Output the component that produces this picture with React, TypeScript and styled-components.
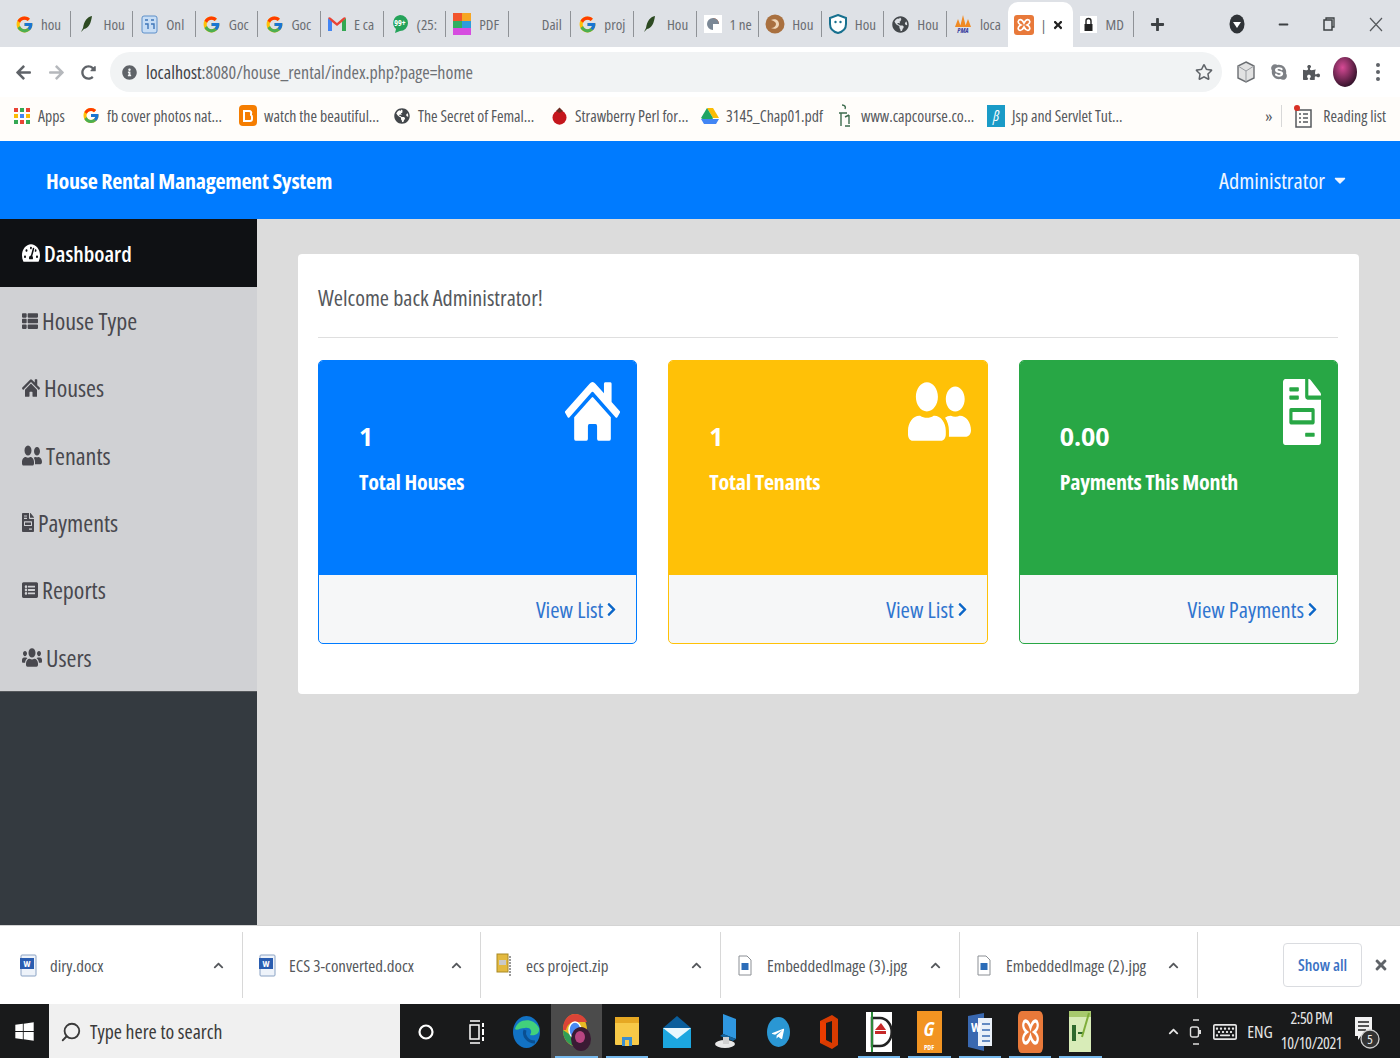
import React from "react";
import styled, { createGlobalStyle } from "styled-components";
import {
  FaTachometerAlt, FaThList, FaHome, FaUserFriends, FaFileInvoice, FaListAlt, FaUsers, FaChevronRight,
  FaArrowLeft, FaArrowRight, FaRedoAlt, FaInfoCircle, FaRegStar, FaSkype, FaPuzzlePiece, FaGlobeAmericas,
  FaWindows, FaTelegramPlane, FaRegKeyboard, FaCaretDown, FaPlus, FaTimes, FaMinus, FaChevronUp,
} from "react-icons/fa";
import { FcGoogle } from "react-icons/fc";
import { FiSearch } from "react-icons/fi";

const GlobalStyle = createGlobalStyle`
  html, body { margin: 0; padding: 0; background: #fff; }
  * { box-sizing: border-box; }
  body { font-family: "Open Sans", "Liberation Sans", sans-serif; font-stretch: 75%; }
`;

const Page = styled.div`
  width: 1400px; height: 1058px; overflow: hidden;
  display: flex; flex-direction: column;
`;

/* ---- browser chrome ---- */
const TabStrip = styled.div`
  height: 47px; flex: none; background: #dee1e6;
  display: flex; align-items: center; padding-left: 8px; padding-top: 1px;
`;
const Tab = styled.div<{ $active?: boolean; $w?: number; $sep?: boolean }>`
  width: ${(p) => p.$w ?? 62.6}px; height: ${(p) => (p.$active ? 46 : 26)}px; flex: none;
  display: flex; align-items: center; gap: 7px; padding-left: 6px; overflow: hidden;
  margin-top: ${(p) => (p.$active ? 1 : 0)}px;
  margin-left: ${(p) => (p.$active ? -2 : 0)}px;
  background: ${(p) => (p.$active ? "#fff" : "transparent")};
  border-radius: ${(p) => (p.$active ? "10px 10px 0 0" : "0")};
  border-right: ${(p) => (p.$sep === false ? "none" : "1px solid #8f9297")};
  font-size: 15px; color: #6a6d72; white-space: nowrap;
`;
const TabIcon = styled.span`
  width: 20px; height: 20px; flex: none; display: flex; align-items: center; justify-content: center;
`;
const TabClose = styled(FaTimes)`
  color: #222; font-size: 12px; margin-left: -2px;
`;
const NewTab = styled(FaPlus)`
  color: #3c4043; font-size: 15px; margin-left: 16px;
`;
const WindowControls = styled.div`
  margin-left: auto; display: flex; align-items: center; color: #3c4043;
`;
const WinBtn = styled.span<{ $w: number }>`
  width: ${(p) => p.$w}px; display: flex; justify-content: center; align-items: center;
`;
const Toolbar = styled.div`
  height: 50px; flex: none; background: #fff; display: flex; align-items: center; padding-left: 13px;
`;
const NavIcon = styled.span<{ $c?: string }>`
  width: 33px; flex: none; display: flex; justify-content: flex-start; padding-left: 2px;
  color: ${(p) => p.$c ?? "#5f6368"}; font-size: 17px;
`;
const Omnibox = styled.div`
  width: 1112px; height: 40px; margin-left: -2px; border-radius: 20px; background: #f1f3f4;
  display: flex; align-items: center; padding-left: 12px; padding-right: 9px; font-size: 18px; color: #3f4246;
`;
const Url = styled.span`
  margin-left: 9px; flex: 1;
`;
const UrlDim = styled.span`
  color: #6d7074;
`;
const ExtIcons = styled.div`
  display: flex; align-items: center; margin-left: 7px; color: #7d8085;
`;
const ExtCell = styled.span`
  width: 33px; flex: none; display: flex; align-items: center; justify-content: center;
`;
const BookmarkBar = styled.div`
  height: 44px; flex: none; background: #fffdfa; display: flex; align-items: center;
  font-size: 15.8px; color: #55585c; white-space: nowrap; padding-bottom: 7px;
`;
const Bookmark = styled.span<{ $x: number; $first?: boolean }>`
  display: flex; align-items: center; gap: 7px; flex: none; width: ${(p) => p.$x}px;
  margin-left: ${(p) => (p.$first ? 13 : 0)}px;
`;
const BmIcon = styled.span`
  width: 18px; height: 18px; flex: none; display: flex; align-items: center; justify-content: center;
`;
const BmRight = styled.div`
  margin-left: auto; display: flex; align-items: center; gap: 10px; padding-right: 14px;
`;
const BmSep = styled.span`
  width: 1px; height: 22px; background: #d8d8d8; margin: 0 1px 0 -1px;
`;

/* ---- app ---- */
const Navbar = styled.header`
  height: 78px; flex: none; background: #007bff; color: #fff;
  display: flex; align-items: center; justify-content: space-between; padding: 0 51px 0 46px;
`;
const Brand = styled.div`
  font-size: 22px; font-weight: 700; letter-spacing: -0.25px;
`;
const UserMenu = styled.div`
  display: flex; align-items: center; gap: 6px; font-size: 22.4px; color: #eef5ff;
`;
const Body = styled.div`
  height: 706px; flex: none; display: flex;
`;
const Sidebar = styled.aside`
  width: 257px; flex: none; background: #343a40; display: flex; flex-direction: column;
`;
const SideList = styled.nav`
  background: #d0d1d4; border-bottom: 1px solid #55585c;
`;
const SideItem = styled.div<{ $active?: boolean }>`
  height: ${(p) => (p.$active ? 68 : 67.3)}px; display: flex; align-items: center; gap: 4px; padding-left: 22px;
  background: ${(p) => (p.$active ? "#0f1114" : "transparent")};
  color: ${(p) => (p.$active ? "#fff" : "#48484e")};
  font-size: ${(p) => (p.$active ? 22 : 24)}px; font-weight: ${(p) => (p.$active ? 600 : 500)};
`;
const SideIcon = styled.span<{ $w: number; $h: number }>`
  flex: none; display: flex;
  svg { width: ${(p) => p.$w}px; height: ${(p) => p.$h}px; display: block; }
`;
const Main = styled.main`
  flex: 1; min-width: 0; background: #dcdcdc; padding: 35px 41px;
`;
const Card = styled.section`
  height: 440px; background: #fff; border-radius: 4px; padding: 0 21px 0 20px;
  display: flex; flex-direction: column;
`;
const Welcome = styled.div`
  height: 84px; flex: none; display: flex; align-items: center; padding-top: 4px;
  border-bottom: 1px solid #dfdfdf; font-size: 22.2px; color: #55585c;
`;
const Summary = styled.div`
  margin-top: 22px; display: grid; grid-template-columns: repeat(3, 1fr); gap: 31px;
`;
const StatCard = styled.div<{ $c: string }>`
  position: relative; height: 284px; border-radius: 5px; border: 1px solid ${(p) => p.$c};
  overflow: hidden; display: flex; flex-direction: column; background: #f6f7f8;
`;
const StatBody = styled.div<{ $c: string }>`
  height: 214px; flex: none; background: ${(p) => p.$c}; color: #fff; padding: 59px 40px 0;
`;
const StatValue = styled.div`
  font-size: 25px; font-weight: 700; font-stretch: 100%; line-height: 32px;
`;
const StatLabel = styled.div`
  font-size: 22px; font-weight: 700; line-height: 30px; margin-top: 14px; letter-spacing: -0.2px;
`;
const StatIcon = styled.span<{ $r: number; $t: number; $w: number; $h: number }>`
  position: absolute; right: ${(p) => p.$r}px; top: ${(p) => p.$t}px; color: #fff;
  svg { display: block; width: ${(p) => p.$w}px; height: ${(p) => p.$h}px; }
`;
const StatFooter = styled.div`
  flex: 1; display: flex; align-items: center; justify-content: flex-end; gap: 1px;
  padding: 0 17px 0 0; font-size: 22.5px; color: #2f74cf;
`;
const Chevron = styled(FaChevronRight)`
  font-size: 15px; color: #0b66c8;
`;

/* ---- download shelf ---- */
const Shelf = styled.div`
  height: 79px; flex: none; background: #fff; border-top: 1px solid #d4d4d4;
  display: flex; align-items: center; font-size: 16.9px; color: #55585c;
`;
const DlItem = styled.div<{ $w: number; $pl: number }>`
  width: ${(p) => p.$w}px; height: 66px; flex: none; display: flex; align-items: center;
  padding: 0 18px 0 ${(p) => p.$pl}px; border-right: 1px solid #d8d8d8; gap: 12px;
`;
const DlName = styled.span`
  flex: 1; white-space: nowrap;
`;
const DlCaret = styled(FaChevronUp)`
  font-size: 11px; color: #55585c;
`;
const ShowAll = styled.div`
  width: 79px; height: 44px; margin-left: auto; border: 1px solid #dadce0; border-radius: 4px;
  display: flex; align-items: center; justify-content: center; color: #3b72c4; font-size: 16px; font-weight: 600;
`;
const ShelfClose = styled(FaTimes)`
  font-size: 16px; color: #5f6368; margin: 0 11px 0 11px;
`;

/* ---- taskbar ---- */
const Taskbar = styled.div`
  height: 55px; flex: none; background: #191a1b; display: flex; align-items: stretch; color: #fff;
`;
const StartBtn = styled.div`
  width: 49px; flex: none; display: flex; align-items: center; justify-content: center; font-size: 21px;
`;
const SearchBox = styled.div`
  width: 351px; flex: none; background: #f0f0f0; color: #3a3a3a; font-size: 19.8px;
  display: flex; align-items: center; gap: 8px; padding-left: 11px;
`;
const SearchIcon = styled(FiSearch)`
  transform: scaleX(-1); font-size: 22px; flex: none;
`;
const TaskBtn = styled.div<{ $w?: number; $on?: boolean; $lit?: boolean }>`
  position: relative;
  width: ${(p) => p.$w ?? 50.4}px; flex: none; display: flex; align-items: center; justify-content: center;
  background: ${(p) => (p.$lit ? "#4b4b4b" : "transparent")};
  &::after {
    content: ""; position: absolute; left: 4px; right: 4px; bottom: 0; height: 3px;
    background: ${(p) => (p.$on ? "#76b9ed" : "transparent")};
  }
`;
const Tray = styled.div`
  margin-left: auto; display: flex; align-items: center; gap: 10px; padding-right: 19px;
  font-size: 17px; color: #e6e6e6;
`;
const Clock = styled.div`
  text-align: center; line-height: 25px; font-size: 16px; letter-spacing: -0.5px;
  margin: 0 1px 2px -2px;
`;

/* ---- little drawn icons ---- */
const G = <FcGoogle size={19} />;
const Quill = (
  <svg width="14" height="18" viewBox="0 0 14 18"><path d="M12 1C7 2 4 6 3 13l-2 4 3-3c5-1 7-6 8-13z" fill="#2d4a22" /></svg>
);
const Onl = (
  <svg width="17" height="19" viewBox="0 0 17 19"><rect x="1" y="1" width="15" height="17" rx="2" fill="#c7ddf5" stroke="#5d8fc9" /><path d="M4 5h3M10 5h3M4 9h3v5M10 9h3v5" stroke="#3f76b8" strokeWidth="1.4" fill="none" /></svg>
);
const Mail = (
  <svg width="18" height="14" viewBox="0 0 18 14"><path d="M0 14V1l4 3v10z" fill="#4285f4" /><path d="M18 14V1l-4 3v10z" fill="#34a853" /><path d="M0 1c1-1 2-1 3 0l6 5 6-5c1-1 2-1 3 0l-4 4-5 4-5-4z" fill="#ea4335" /></svg>
);
const Nn = (
  <svg width="18" height="20" viewBox="0 0 18 20"><path d="M9 1a8 8 0 110 16l-5 2 1-4A8 8 0 019 1z" fill="#25a35a" /><text x="9" y="12" fontSize="8" fill="#fff" textAnchor="middle" fontWeight="700">99+</text></svg>
);
const Pdf = (
  <svg width="18" height="22" viewBox="0 0 18 22"><rect width="9" height="8" fill="#f2542d" /><rect x="9" width="9" height="8" fill="#f6a623" /><rect y="8" width="9" height="7" fill="#2fae60" /><rect x="9" y="8" width="9" height="7" fill="#2d9cdb" /><rect y="15" width="18" height="7" fill="#d64ce0" /></svg>
);
const Ne = (
  <svg width="18" height="18" viewBox="0 0 18 18"><rect width="18" height="18" fill="#fff" /><path d="M9 3a6 6 0 016 6H9z" fill="#e2632d" /><path d="M3 9a6 6 0 0112-0H9v6a6 6 0 01-6-6z" fill="#7b8896" /></svg>
);
const Brown = (
  <svg width="20" height="20" viewBox="0 0 20 20"><circle cx="10" cy="10" r="9.5" fill="#a9703f" /><path d="M6 6c4-2 8 0 8 4s-4 6-8 4c3 0 5-2 5-4s-2-3-5-4z" fill="#f0d7b8" /></svg>
);
const ShieldFace = (
  <svg width="18" height="20" viewBox="0 0 18 20"><path d="M9 1l8 3v6c0 5-4 8-8 9-4-1-8-4-8-9V4z" fill="#fff" stroke="#17708f" strokeWidth="2" /><circle cx="6.5" cy="8" r="1.2" fill="#17708f" /><circle cx="11.5" cy="8" r="1.2" fill="#17708f" /></svg>
);
const Globe = <FaGlobeAmericas size={17} color="#43474b" />;
const Pma = (
  <svg width="20" height="20" viewBox="0 0 20 20"><path d="M10 1l3 12H7zM5 5l3 8H2zM15 5l3 8h-6z" fill="#f08a24" /><text x="10" y="19" fontSize="7" fontWeight="700" fill="#3b3f9e" textAnchor="middle" fontStyle="italic">PMA</text></svg>
);
const Xampp = ({ s = 20, h }: { s?: number; h?: number }) => (
  <svg width={s} height={h ?? s} viewBox="0 0 20 20" preserveAspectRatio="none"><rect width="20" height="20" rx="3" fill="#e8793a" /><path d="M5 5c2-1 4 1 5 3 1-2 3-4 5-3 2 2 0 4-2 5 2 1 4 3 2 5-2 1-4-1-5-3-1 2-3 4-5 3-2-2 0-4 2-5-2-1-4-3-2-5z" stroke="#fff" strokeWidth="1.7" fill="none" /></svg>
);
const LockIc = (
  <svg width="17" height="17" viewBox="0 0 17 17"><rect width="17" height="17" fill="#fff" /><rect x="4.5" y="8" width="8" height="7" fill="#222" /><path d="M6 8V5a2.5 2.5 0 015 0v3" stroke="#222" strokeWidth="1.4" fill="none" /></svg>
);
const Apps = (
  <svg width="16" height="16" viewBox="0 0 16 16">
    {[0, 1, 2].flatMap((r) =>
      [0, 1, 2].map((c) => (
        <rect key={`${r}${c}`} x={c * 6} y={r * 6} width="4" height="4" fill={["#ea4335", "#fbbc05", "#34a853", "#4285f4"][(r + c * 2) % 4]} />
      )),
    )}
  </svg>
);
const Blogger = (
  <svg width="18" height="21" viewBox="0 0 18 21"><rect width="18" height="21" rx="4" fill="#f57d00" /><path d="M5 6h5a2 2 0 012 3v1a2 2 0 011 2v2a2 2 0 01-2 2H5z" fill="none" stroke="#fff" strokeWidth="2" /></svg>
);
const Straw = (
  <svg width="15" height="18" viewBox="0 0 15 18"><ellipse cx="7.5" cy="10.5" rx="7" ry="7.2" fill="#c4161c" /><path d="M4 4l3.5-3.5L11 4l-3.5 2z" fill="#6e2a20" /></svg>
);
const Drive = (
  <svg width="18" height="16" viewBox="0 0 18 16"><path d="M6 0h6l6 10h-6z" fill="#fbbc05" /><path d="M6 0l6 10-3 6-9-6z" fill="#1fa463" /><path d="M0 11h18l-3 5H3z" fill="#4285f4" /></svg>
);
const Cap = (
  <svg width="14" height="24" viewBox="0 0 14 24"><path d="M4 1c3 0 4 2 3 4M1 9h8M3 9v13M11 11v9M7 13l4-2M7 22h5" stroke="#3d6b4d" strokeWidth="1.4" fill="none" /></svg>
);
const Beta = (
  <svg width="18" height="22" viewBox="0 0 18 22"><rect width="18" height="22" fill="#1a9bc7" /><text x="9" y="16" fontSize="15" fill="#fff" textAnchor="middle" fontStyle="italic">β</text></svg>
);
const Reading = (
  <svg width="20" height="24" viewBox="0 0 20 24"><rect x="3" y="6" width="15" height="17" fill="none" stroke="#55585c" strokeWidth="1.5" /><path d="M6 10h2M10 10h5M6 14h2M10 14h5M6 18h2M10 18h5" stroke="#55585c" strokeWidth="1.4" /><circle cx="4" cy="4" r="3" fill="#d93025" /></svg>
);
const Avatar = (
  <svg width="24" height="30" viewBox="0 0 24 30"><defs><radialGradient id="av" cx="0.4" cy="0.35" r="0.7"><stop offset="0" stopColor="#d64a95" /><stop offset="1" stopColor="#2b0f24" /></radialGradient></defs><ellipse cx="12" cy="15" rx="12" ry="15" fill="url(#av)" /></svg>
);
const Dots = (
  <svg width="4" height="20" viewBox="0 0 4 20"><circle cx="2" cy="3" r="2" fill="#5f6368" /><circle cx="2" cy="10" r="2" fill="#5f6368" /><circle cx="2" cy="17" r="2" fill="#5f6368" /></svg>
);
const ShieldExt = (
  <svg width="18" height="22" viewBox="0 0 18 22"><path d="M9 1l8 4v12l-8 4-8-4V5z" fill="#e2e2e2" stroke="#6b6e72" strokeWidth="1.4" /><path d="M9 10v11M1 5l8 5 8-5" fill="none" stroke="#9a9da1" /></svg>
);
const WordFile = (
  <svg width="19" height="24" viewBox="0 0 19 24"><rect x="2" y="2" width="15" height="21" rx="1" fill="#eef3fa" stroke="#8aa2c4" /><rect x="1" y="5" width="14" height="11" fill="#2a5db0" /><text x="8" y="14" fontSize="9" fontWeight="700" fill="#fff" textAnchor="middle">W</text></svg>
);
const ZipFile = (
  <svg width="18" height="25" viewBox="0 0 18 25"><rect x="1" y="1" width="11" height="18" fill="#e3b93f" stroke="#a98a25" /><rect x="3" y="7" width="7" height="5" fill="#c9c9c9" /><path d="M14 3v21" stroke="#9a9a9a" strokeWidth="2" strokeDasharray="2 1" /></svg>
);
const ImgFile = (
  <svg width="17" height="21" viewBox="0 0 17 21"><path d="M1 1h8l4 4v15H1z" fill="#fff" stroke="#8b8f94" /><rect x="3.5" y="8" width="7" height="7" fill="#2b6cb8" /></svg>
);
const Ring = (
  <svg width="16" height="16" viewBox="0 0 16 16"><circle cx="8" cy="8" r="6.5" fill="none" stroke="#fff" strokeWidth="2.2" /></svg>
);
const TaskView = (
  <svg width="18" height="24" viewBox="0 0 18 24"><path d="M2 1h10M2 23h10" stroke="#fff" strokeWidth="1.3" /><rect x="2" y="5" width="9" height="14" fill="none" stroke="#fff" strokeWidth="1.5" /><path d="M15 3v4M15 9v6M15 17v4" stroke="#fff" strokeWidth="2" /></svg>
);
const Edge = (
  <svg width="27" height="32" viewBox="0 0 27 32"><ellipse cx="13.5" cy="16" rx="13.5" ry="16" fill="#1272c4" /><path d="M2 13C4 3 20 0 26 12c1 6-4 8-9 7 3-4 0-8-5-7-5 0-8 3-10 1z" fill="#42d07c" /><path d="M12 14c-2 5 2 12 10 12" stroke="#0a4f91" strokeWidth="3" fill="none" /></svg>
);
const ChromeAv = (
  <svg width="28" height="38" viewBox="0 0 28 38"><ellipse cx="12" cy="17" rx="12" ry="16" fill="#e8b923" /><path d="M0 17C0 6 6 1 12 1c6 0 10 3 12 8H12c-5 0-8 3-9 8z" fill="#db4437" /><path d="M0 17c0 9 5 15 12 16l5-12H6z" fill="#2f9e57" /><ellipse cx="12" cy="17" rx="6" ry="8" fill="#4a8af4" stroke="#fff" strokeWidth="1.5" /><ellipse cx="18" cy="26" rx="10" ry="12" fill="#3a1b34" /><ellipse cx="17" cy="24" rx="5" ry="6" fill="#b84582" /></svg>
);
const Explorer = (
  <svg width="24" height="34" viewBox="0 0 24 34"><rect y="2" width="24" height="28" rx="1" fill="#f7c948" /><rect y="2" width="24" height="6" fill="#e6a823" /><rect x="7" y="22" width="10" height="9" fill="#3b8ed0" /><rect x="10" y="25" width="4" height="6" fill="#f7c948" /></svg>
);
const MailTile = (
  <svg width="28" height="32" viewBox="0 0 28 32"><path d="M14 0l14 12H0z" fill="#0a5e9c" /><rect y="12" width="28" height="20" fill="#1ca6df" /><path d="M0 12l14 11 14-11z" fill="#e8f7fd" /></svg>
);
const PcUser = (
  <svg width="26" height="38" viewBox="0 0 26 38"><path d="M8 1l13 5v20l-13-5z" fill="#2f97e0" /><path d="M8 21l13 5-3 2-13-5z" fill="#15649e" /><ellipse cx="10" cy="31" rx="10" ry="4" fill="#e8e8e8" /><rect x="8" y="24" width="6" height="7" fill="#d0d0d0" /></svg>
);
const Telegram = (
  <svg width="23" height="30" viewBox="0 0 23 30"><ellipse cx="11.5" cy="15" rx="11.5" ry="15" fill="#2a97d4" /><foreignObject x="4" y="7" width="16" height="16"><FaTelegramPlane size={14} color="#fff" /></foreignObject></svg>
);
const Office = (
  <svg width="20" height="34" viewBox="0 0 20 34"><path d="M1 6l12-6 6 4v26l-6 4-12-6z" fill="#d83b01" /><path d="M7 8l6-2v22l-6-3z" fill="#1a1a1a" /><path d="M1 6l6 2v17l-6 3z" fill="#eb3c00" /></svg>
);
const DIcon = (
  <svg width="26" height="44" viewBox="0 0 26 44"><rect y="2" width="26" height="40" fill="#fff" /><path d="M6 8h8a10 12 0 010 28H6z" fill="none" stroke="#222" strokeWidth="2.5" /><path d="M6 2v40" stroke="#2d8a3a" strokeWidth="2" /><path d="M9 20l6-7 5 7z" fill="#c62828" /><rect x="9" y="21" width="11" height="3" fill="#c62828" /></svg>
);
const GPdf = (
  <svg width="25" height="44" viewBox="0 0 25 44"><rect y="1" width="25" height="42" fill="#f29422" /><text x="12" y="26" fontSize="20" fontWeight="700" fontStyle="italic" fill="#fff" textAnchor="middle">G</text><text x="12" y="40" fontSize="7" fontWeight="700" fill="#fff" textAnchor="middle">PDF</text></svg>
);
const WordTile = (
  <svg width="24" height="40" viewBox="0 0 24 40"><path d="M0 4l16-3v38L0 35z" fill="#3968b0" /><rect x="10" y="6" width="14" height="28" fill="#eaf0f8" /><text x="8" y="20" fontSize="13" fontWeight="700" fill="#fff" textAnchor="middle">W</text><path d="M14 12h8M14 18h8M14 24h8M14 29h8" stroke="#3968b0" strokeWidth="1.5" /></svg>
);
const Notepad = (
  <svg width="22" height="42" viewBox="0 0 22 42"><rect y="2" width="22" height="39" fill="#d8ecb8" /><rect width="22" height="6" fill="#a7c96d" /><path d="M4 15h2v14H4zM9 22h6" stroke="#2d6a2d" strokeWidth="2" /><path d="M20 2l-7 24" stroke="#7fae3a" strokeWidth="2" /></svg>
);
const CamTray = (
  <svg width="14" height="28" viewBox="0 0 14 28"><path d="M4 2h6M4 26h6" stroke="#ddd" strokeWidth="1.5" /><rect x="1.5" y="9" width="8" height="10" rx="2" fill="none" stroke="#ddd" strokeWidth="1.4" /><path d="M11 12v4" stroke="#ddd" strokeWidth="2" /></svg>
);
const Notif = (
  <svg width="28" height="36" viewBox="0 0 28 36"><path d="M2 3h17v19H8l-3 4v-4H2z" fill="#f2f2f2" /><path d="M5 8h11M5 12h11M5 16h8" stroke="#222" strokeWidth="1.5" /><circle cx="17" cy="25" r="9" fill="#333" stroke="#ccc" strokeWidth="1.3" /><text x="17" y="30" fontSize="13" fill="#eee" textAnchor="middle">5</text></svg>
);
const RestoreIc = (
  <svg width="12" height="14" viewBox="0 0 12 14"><path d="M3 3V1h8v9H9" fill="none" stroke="#3c4043" strokeWidth="1.3" /><rect x="1" y="3" width="8" height="10" fill="none" stroke="#3c4043" strokeWidth="1.5" /></svg>
);
const ThinX = (
  <svg width="14" height="15" viewBox="0 0 14 15"><path d="M1 1l12 13M13 1L1 14" stroke="#55585c" strokeWidth="1.2" /></svg>
);
const ProfileDot = (
  <svg width="16" height="20" viewBox="0 0 16 20"><ellipse cx="8" cy="10" rx="7.5" ry="9.5" fill="#2f3337" /><path d="M4 8h8l-4 6z" fill="#fff" /></svg>
);

const tabs: { icon?: React.ReactNode; text: string }[] = [
  { icon: G, text: "hou" }, { icon: Quill, text: "Hou" }, { icon: Onl, text: "Onl" }, { icon: G, text: "Goc" },
  { icon: G, text: "Goc" }, { icon: Mail, text: "E ca" }, { icon: Nn, text: "(25:" }, { icon: Pdf, text: "PDF" },
  { text: "Dail" }, { icon: G, text: "proj" }, { icon: Quill, text: "Hou" }, { icon: Ne, text: "1 ne" },
  { icon: Brown, text: "Hou" }, { icon: ShieldFace, text: "Hou" }, { icon: Globe, text: "Hou" }, { icon: Pma, text: "loca" },
];

const bookmarks: { icon: React.ReactNode; text: string; w: number }[] = [
  { icon: Apps, text: "Apps", w: 69 }, { icon: G, text: "fb cover photos nat...", w: 157 },
  { icon: Blogger, text: "watch the beautiful...", w: 154 }, { icon: <FaGlobeAmericas size={16} color="#43474b" />, text: "The Secret of Femal...", w: 157 },
  { icon: Straw, text: "Strawberry Perl for...", w: 151 }, { icon: Drive, text: "3145_Chap01.pdf", w: 135 },
  { icon: Cap, text: "www.capcourse.co...", w: 151 }, { icon: Beta, text: "Jsp and Servlet Tut...", w: 150 },
];

const side = [
  { Icon: FaTachometerAlt, w: 18, h: 20, text: "Dashboard", active: true },
  { Icon: FaThList, w: 16, h: 18, text: "House Type" },
  { Icon: FaHome, w: 18, h: 20, text: "Houses" },
  { Icon: FaUserFriends, w: 20, h: 23, text: "Tenants" },
  { Icon: FaFileInvoice, w: 12, h: 19, text: "Payments" },
  { Icon: FaListAlt, w: 16, h: 18, text: "Reports" },
  { Icon: FaUsers, w: 20, h: 21, text: "Users" },
];

const stats = [
  { c: "#007bff", value: "1", label: "Total Houses", link: "View List", Icon: FaHome, r: 16, t: 17, w: 55, h: 67 },
  { c: "#ffc107", value: "1", label: "Total Tenants", link: "View List", Icon: FaUserFriends, r: 16, t: 17, w: 63, h: 67 },
  { c: "#28a745", value: "0.00", label: "Payments This Month", link: "View Payments", Icon: FaFileInvoice, r: 16, t: 18, w: 38, h: 66 },
];

const downloads = [
  { icon: WordFile, name: "diry.docx", w: 243, pl: 19 }, { icon: WordFile, name: "ECS 3-converted.docx", w: 238, pl: 15 },
  { icon: ZipFile, name: "ecs project.zip", w: 240, pl: 15 }, { icon: ImgFile, name: "EmbeddedImage (3).jpg", w: 239, pl: 17 },
  { icon: ImgFile, name: "EmbeddedImage (2).jpg", w: 238, pl: 17 },
];

const taskIcons: { icon: React.ReactNode; on?: boolean; lit?: boolean }[] = [
  { icon: Edge }, { icon: ChromeAv, on: true, lit: true }, { icon: Explorer, on: true }, { icon: MailTile }, { icon: PcUser },
  { icon: Telegram }, { icon: Office }, { icon: DIcon, on: true }, { icon: GPdf, on: true }, { icon: WordTile, on: true },
  { icon: <Xampp s={25} h={42} />, on: true }, { icon: Notepad, on: true },
];

export default function App() {
  return (
    <Page>
      <GlobalStyle />
      <TabStrip>
        {tabs.map((t, i) => (
          <Tab key={i}>
            <TabIcon>{t.icon}</TabIcon>
            {t.text}
          </Tab>
        ))}
        <Tab $active $w={65} $sep={false}>
          <TabIcon><Xampp /></TabIcon>
          |<TabClose />
        </Tab>
        <Tab $w={61}><TabIcon>{LockIc}</TabIcon>MD</Tab>
        <NewTab />
        <WindowControls>
          <WinBtn $w={46}>{ProfileDot}</WinBtn>
          <WinBtn $w={46}><FaMinus size={11} /></WinBtn>
          <WinBtn $w={46}>{RestoreIc}</WinBtn>
          <WinBtn $w={48}>{ThinX}</WinBtn>
        </WindowControls>
      </TabStrip>
      <Toolbar>
        <NavIcon><FaArrowLeft /></NavIcon>
        <NavIcon $c="#b5b8bc"><FaArrowRight /></NavIcon>
        <NavIcon><FaRedoAlt size={15} /></NavIcon>
        <Omnibox>
          <FaInfoCircle size={15} color="#5f6368" />
          <Url>localhost<UrlDim>:8080/house_rental/index.php?page=home</UrlDim></Url>
          <FaRegStar size={18} color="#5f6368" />
        </Omnibox>
        <ExtIcons>
          <ExtCell>{ShieldExt}</ExtCell>
          <ExtCell><FaSkype size={18} /></ExtCell>
          <ExtCell><FaPuzzlePiece size={17} color="#55585c" /></ExtCell>
          <ExtCell>{Avatar}</ExtCell>
          <ExtCell>{Dots}</ExtCell>
        </ExtIcons>
      </Toolbar>
      <BookmarkBar>
        {bookmarks.map((b, i) => (
          <Bookmark key={i} $x={b.w} $first={i === 0}>
            <BmIcon>{b.icon}</BmIcon>
            {b.text}
          </Bookmark>
        ))}
        <BmRight>
          <span>»</span>
          <BmSep />
          {Reading}
          <span>Reading list</span>
        </BmRight>
      </BookmarkBar>
      <Navbar>
        <Brand>House Rental Management System</Brand>
        <UserMenu>Administrator <FaCaretDown size={18} /></UserMenu>
      </Navbar>
      <Body>
        <Sidebar>
          <SideList>
            {side.map((s) => (
              <SideItem key={s.text} $active={s.active}>
                <SideIcon $w={s.w} $h={s.h}><s.Icon preserveAspectRatio="none" /></SideIcon>
                {s.text}
              </SideItem>
            ))}
          </SideList>
        </Sidebar>
        <Main>
          <Card>
            <Welcome>Welcome back Administrator!</Welcome>
            <Summary>
              {stats.map((s) => (
                <StatCard key={s.label} $c={s.c}>
                  <StatBody $c={s.c}>
                    <StatValue>{s.value}</StatValue>
                    <StatLabel>{s.label}</StatLabel>
                  </StatBody>
                  <StatIcon $r={s.r} $t={s.t} $w={s.w} $h={s.h}>
                    <s.Icon preserveAspectRatio="none" />
                  </StatIcon>
                  <StatFooter>
                    {s.link} <Chevron />
                  </StatFooter>
                </StatCard>
              ))}
            </Summary>
          </Card>
        </Main>
      </Body>
      <Shelf>
        {downloads.map((d) => (
          <DlItem key={d.name} $w={d.w} $pl={d.pl}>
            {d.icon}
            <DlName>{d.name}</DlName>
            <DlCaret />
          </DlItem>
        ))}
        <ShowAll>Show all</ShowAll>
        <ShelfClose />
      </Shelf>
      <Taskbar>
        <StartBtn><FaWindows /></StartBtn>
        <SearchBox><SearchIcon />Type here to search</SearchBox>
        <TaskBtn $w={52}>{Ring}</TaskBtn>
        <TaskBtn $w={49}>{TaskView}</TaskBtn>
        {taskIcons.map((t, i) => (
          <TaskBtn key={i} $on={t.on} $lit={t.lit}>{t.icon}</TaskBtn>
        ))}
        <Tray>
          <FaChevronUp size={11} />
          {CamTray}
          <FaRegKeyboard size={24} />
          <span>ENG</span>
          <Clock>2:50 PM<br />10/10/2021</Clock>
          {Notif}
        </Tray>
      </Taskbar>
    </Page>
  );
}
